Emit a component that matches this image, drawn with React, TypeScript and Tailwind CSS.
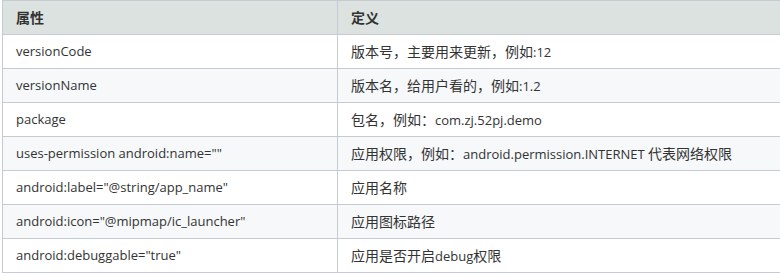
import React from 'react';

const rows: [string, string][] = [
  ['versionCode', '版本号，主要用来更新，例如:12'],
  ['versionName', '版本名，给用户看的，例如:1.2'],
  ['package', '包名，例如：com.zj.52pj.demo'],
  ['uses-permission android:name=""', '应用权限，例如：android.permission.INTERNET 代表网络权限'],
  ['android:label="@string/app_name"', '应用名称'],
  ['android:icon="@mipmap/ic_launcher"', '应用图标路径'],
  ['android:debuggable="true"', '应用是否开启debug权限'],
];

// CJK runs are set a pixel larger than the Latin text, as in the original
function Mixed({ text }: { text: string }) {
  const parts = text.split(/([\u3000-\u9fff\uff00-\uffef]+)/);
  return (
    <>
      {parts.map((p, i) =>
        i % 2 === 1 ? (
          <span key={i} className="text-[14px]">{p}</span>
        ) : (
          <span key={i}>{p}</span>
        )
      )}
    </>
  );
}

export default function App() {
  return (
    <div
      className="w-[780px] h-[273px] overflow-hidden bg-white pl-[2px]"
      style={{ fontFamily: '"Open Sans", "Noto Sans CJK SC", sans-serif' }}
    >
      <table className="border-collapse w-[800px] text-[13px] text-[#333] table-fixed">
        <colgroup>
          <col className="w-[335px]" />
          <col />
        </colgroup>
        <thead>
          <tr className="bg-[#dbe2df] h-[34px]">
            <th className="border border-[#c6cbd1] text-left font-bold text-[14px] px-[13px] py-0">属性</th>
            <th className="border border-[#c6cbd1] text-left font-bold text-[14px] px-[13px] py-0">定义</th>
          </tr>
        </thead>
        <tbody>
          {rows.map(([k, v], i) => (
            <tr key={k} className={`h-[34px] ${i % 2 === 1 ? 'bg-[#f6f8fa]' : 'bg-white'}`}>
              <td className="border border-[#c6cbd1] px-[13px] py-0 whitespace-nowrap leading-none">
                <Mixed text={k} />
              </td>
              <td className="border border-[#c6cbd1] px-[13px] py-0 whitespace-nowrap leading-none">
                <Mixed text={v} />
              </td>
            </tr>
          ))}
        </tbody>
      </table>
    </div>
  );
}
